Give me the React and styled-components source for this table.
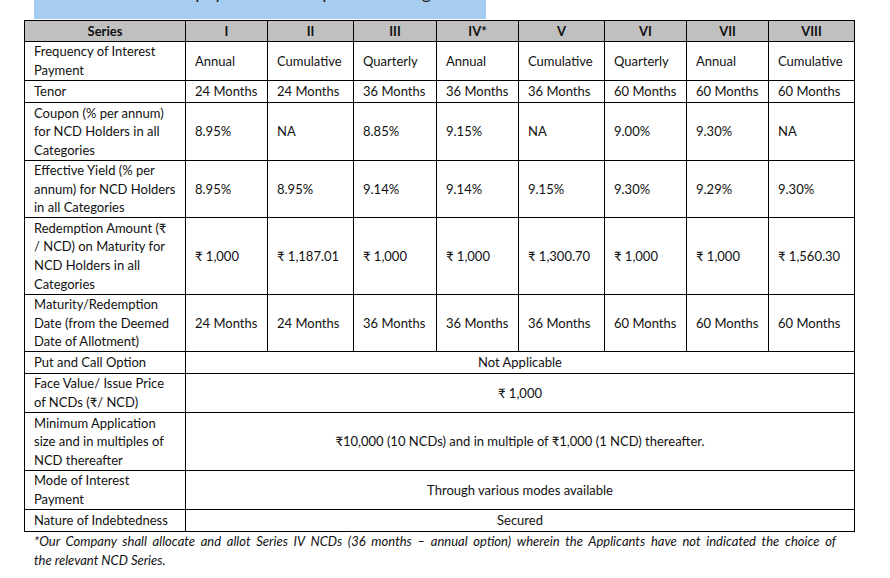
import styled, { createGlobalStyle } from "styled-components";

const GlobalStyle = createGlobalStyle`
  body {
    margin: 0;
    background: #ffffff;
    font-family: Lato, "Noto Sans", "DejaVu Sans", sans-serif;
    color: #111;
  }
`;

const series = ["I", "II", "III", "IV*", "V", "VI", "VII", "VIII"];
const colWidths = [161, 82, 86, 83, 82, 86, 82, 82, 86];

const rows = [
  {
    label: ["Frequency of Interest", "Payment"],
    h: 39,
    cells: ["Annual", "Cumulative", "Quarterly", "Annual", "Cumulative", "Quarterly", "Annual", "Cumulative"],
  },
  {
    label: ["Tenor"],
    h: 22,
    cells: ["24 Months", "24 Months", "36 Months", "36 Months", "36 Months", "60 Months", "60 Months", "60 Months"],
  },
  {
    label: ["Coupon (% per annum)", "for NCD Holders in all", "Categories"],
    h: 58,
    cells: ["8.95%", "NA", "8.85%", "9.15%", "NA", "9.00%", "9.30%", "NA"],
  },
  {
    label: ["Effective Yield (% per", "annum) for NCD Holders", "in all Categories"],
    h: 57,
    cells: ["8.95%", "8.95%", "9.14%", "9.14%", "9.15%", "9.30%", "9.29%", "9.30%"],
  },
  {
    label: ["Redemption Amount (₹", "/ NCD) on Maturity for", "NCD Holders in all", "Categories"],
    h: 77,
    cells: ["₹ 1,000", "₹ 1,187.01", "₹ 1,000", "₹ 1,000", "₹ 1,300.70", "₹ 1,000", "₹ 1,000", "₹ 1,560.30"],
  },
  {
    label: ["Maturity/Redemption", "Date (from the Deemed", "Date of Allotment)"],
    h: 57,
    cells: ["24 Months", "24 Months", "36 Months", "36 Months", "36 Months", "60 Months", "60 Months", "60 Months"],
  },
  { label: ["Put and Call Option"], h: 22, span: "Not Applicable" },
  { label: ["Face Value/ Issue Price", "of NCDs (₹/ NCD)"], h: 39, span: "₹ 1,000" },
  {
    label: ["Minimum Application", "size and in multiples of", "NCD thereafter"],
    h: 58,
    span: "₹10,000 (10 NCDs) and in multiple of ₹1,000 (1 NCD) thereafter.",
  },
  { label: ["Mode of Interest", "Payment"], h: 39, span: "Through various modes available" },
  { label: ["Nature of Indebtedness"], h: 21, span: "Secured" },
];

export default function App() {
  return (
    <Page>
      <GlobalStyle />
      <Banner>
        <BannerText>Terms of payment on coupon for listing</BannerText>
      </Banner>

      <Table>
        <colgroup>
          {colWidths.map((w, i) => (
            <col key={i} style={{ width: w }} />
          ))}
        </colgroup>
        <thead>
          <tr>
            <HeadCell>Series</HeadCell>
            {series.map((s) => (
              <HeadCell key={s}>{s}</HeadCell>
            ))}
          </tr>
        </thead>
        <tbody>
          {rows.map((row, i) => (
            <Row key={i} $h={row.h}>
              <LabelCell>
                {row.label.map((line, j) => (
                  <Line key={j}>{line}</Line>
                ))}
              </LabelCell>
              {row.span ? (
                <SpanCell colSpan={8}>{row.span}</SpanCell>
              ) : (
                row.cells.map((c, j) => <Cell key={j}>{c}</Cell>)
              )}
            </Row>
          ))}
        </tbody>
      </Table>

      <Note>
        <NoteLine $justify>
          *Our Company shall allocate and allot Series IV NCDs (36 months – annual option) wherein the Applicants have
          not indicated the choice of
        </NoteLine>
        <NoteLine>the relevant NCD Series.</NoteLine>
      </Note>
    </Page>
  );
}

const Page = styled.div`
  width: 890px;
  height: 578px;
  padding-left: 24px;
  box-sizing: border-box;
  overflow: hidden;
`;

const Banner = styled.div`
  margin-left: 10px;
  width: 452px;
  height: 19px;
  background: #a6cdf0;
  overflow: hidden;
  margin-bottom: 1px;
`;

const BannerText = styled.div`
  font-size: 18px;
  line-height: 18px;
  margin-top: -17px;
  padding-left: 89px;
  white-space: nowrap;
  color: #1c1c1c;
`;

const Table = styled.table`
  border-collapse: collapse;
  table-layout: fixed;
  width: 831px;
  font-size: 13px;
  line-height: 18.6px;
`;

const HeadCell = styled.th`
  height: 20px;
  padding: 0 4px;
  background: #c0c0c0;
  border: 1px solid #000;
  font-weight: 700;
  text-align: center;
  vertical-align: middle;
`;

const Row = styled.tr`
  height: ${(p) => p.$h}px;
`;

const LabelCell = styled.td`
  padding: 0 4px 0 9px;
  border: 1px solid #000;
  vertical-align: middle;
`;

const Line = styled.span`
  display: block;
  white-space: nowrap;
`;

const Cell = styled.td`
  padding: 0 2px 0 9px;
  border: 1px solid #000;
  vertical-align: middle;
  white-space: nowrap;
`;

const SpanCell = styled.td`
  border: 1px solid #000;
  text-align: center;
  vertical-align: middle;
`;

const Note = styled.div`
  margin-left: 10px;
  width: 802px;
  font-size: 13px;
  font-style: italic;
  line-height: 19px;
`;

const NoteLine = styled.span`
  display: block;
  text-align: justify;
  text-align-last: ${(p) => (p.$justify ? "justify" : "left")};
`;
